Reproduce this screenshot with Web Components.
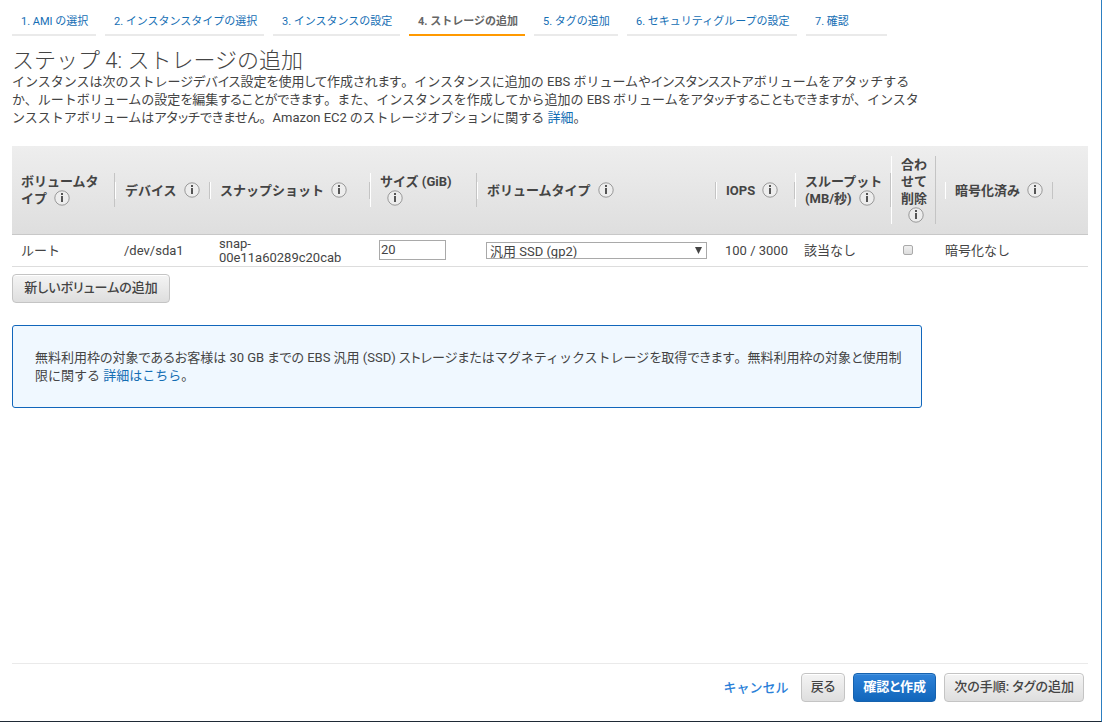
<!DOCTYPE html>
<html lang="ja">
<head>
<meta charset="utf-8">
<meta name="viewport" content="width=device-width, initial-scale=1">
<title>ステップ 4: ストレージの追加</title>
<style>
  body {
    margin: 0;
    background: #fff;
    color: #444;
    font: 13px/18px Roboto, "Noto Sans CJK JP", sans-serif;
  }
  .proportional { font-feature-settings: "palt"; }
</style>
</head>
<body>
<launch-wizard>
  <step-nav slot="nav">
    <step-tab>1. AMI の選択</step-tab>
    <step-tab>2. インスタンスタイプの選択</step-tab>
    <step-tab>3. インスタンスの設定</step-tab>
    <step-tab current>4. ストレージの追加</step-tab>
    <step-tab>5. タグの追加</step-tab>
    <step-tab>6. セキュリティグループの設定</step-tab>
    <step-tab>7. 確認</step-tab>
  </step-nav>
  <step-intro heading="ステップ 4: ストレージの追加">インスタンスは次のストレージ<span class="proportional">デバイス設定を使用して作成されます</span>。インスタンスに追加の EBS ボリュームや<span class="proportional">インスタンスストア</span>ボリュームをアタッチする<br>か、ルートボリュームの<span class="proportional">設定を編集することができます</span>。また、インスタンスを作成してから追加の EBS ボリュームを<span class="proportional">アタッチすることもできますが</span>、インスタ<br>ンスストアボリュームは<span class="proportional">アタッチできません</span>。<span class="proportional">Amazon EC2 の</span>ストレージオプションに関する<text-link>詳細</text-link>。</step-intro>
  <volume-table></volume-table>
  <aws-button class="add">新しいボリュームの追加</aws-button>
  <info-box><span class="proportional">無料利用枠の対象であるお客様は 30 GB までの EBS 汎用 (SSD) ストレージまたは</span>マグネティックストレージ<span class="proportional">を取得できます</span>。<span class="proportional">無料利用枠の対象と使用制</span><br>限に関する <text-link>詳細はこちら</text-link>。</info-box>
  <wizard-footer slot="footer">
    <text-link action>キャンセル</text-link>
    <aws-button>戻る</aws-button>
    <aws-button primary>確認と作成</aws-button>
    <aws-button>次の手順: タグの追加</aws-button>
  </wizard-footer>
</launch-wizard>

<script>
const define = (name, render) => customElements.define(name, class extends HTMLElement {
  constructor() {
    super();
    const template = document.createElement('template');
    template.innerHTML = render(this);
    this.attachShadow({ mode: 'open' }).append(template.content.cloneNode(true));
  }
});

define('launch-wizard', () => `
  <style>
    :host { display: flex; flex-direction: column; box-sizing: border-box; min-height: 100vh;
      padding: 8px 13px 19px 12px; border-right: 1px solid #2d7fc1; border-bottom: 1px solid #1f2a36; }
    main { flex: 1; display: flex; flex-direction: column; align-items: flex-start; }
    ::slotted(volume-table) { align-self: stretch; margin-top: 19px; }
    ::slotted(.add) { min-width: 158px; margin-top: 7px; }
    ::slotted(info-box) { margin-top: 22px; }
  </style>
  <slot name="nav"></slot>
  <main><slot></slot></main>
  <slot name="footer"></slot>`);

define('step-nav', () => `
  <style>
    :host { display: block; }
    nav { display: grid; grid-template-columns: 84px 159px 127px 116px 84px 170px 81px; gap: 9px; }
  </style>
  <nav><slot></slot></nav>`);

define('step-tab', el => `
  <style>
    :host { display: block; box-sizing: border-box; height: 28px; padding: 2px 0 0 9px; border-bottom: 2px solid #eaeaea;
      font-size: 11px; line-height: 24px; white-space: nowrap; }
    :host([current]) { border-color: #f90; font-weight: 700; }
    a { color: #146eb4; text-decoration: none; }
    :host([current]) a { color: #666; }
  </style>
  <a href="#"${el.hasAttribute('current') ? ' aria-current="step"' : ''}><slot></slot></a>`);

define('step-intro', el => `
  <style>
    :host { display: block; max-width: 940px; }
    h1 { margin: 13px 0 0; font-size: 22px; line-height: 24px; font-weight: 300; }
    p { margin: 0; line-height: 18px; }
  </style>
  <h1>${el.getAttribute('heading')}</h1>
  <p><slot></slot></p>`);

define('text-link', () => `
  <style>
    :host { display: inline; }
    a { color: #146eb4; text-decoration: none; }
    :host([action]) a { color: #2a7fd8; font-weight: 500; }
  </style>
  <a href="#"><slot></slot></a>`);

define('info-icon', () => `
  <style>
    :host { display: inline-block; width: 16px; height: 16px; margin-left: 7px; vertical-align: -3px; }
    svg { display: block; }
  </style>
  <svg width="16" height="16" viewBox="0 0 16 16" aria-hidden="true">
    <circle cx="8" cy="8" r="7.200" fill="#ededed" stroke="#999"/>
    <path d="M7 3h2v2H7zM7 6h2v6H7z" fill="#555"/>
  </svg>`);

define('aws-button', () => `
  <style>
    :host { display: block; }
    button { display: block; box-sizing: border-box; width: 100%; height: 29px; margin: 0; padding: 0 9px 2px; border: 1px solid #c4c4c4;
      border-radius: 4px; background: linear-gradient(#f4f4f4, #dedede); box-shadow: inset 0 1px #fff;
      color: #444; font: inherit; font-weight: 500; line-height: 25px; white-space: nowrap; font-feature-settings: "palt"; }
    :host([primary]) button { border-color: #1662ae; background: linear-gradient(#2f82d8, #1166bb);
      box-shadow: inset 0 1px #4a95e0; color: #fff; font-weight: 700; }
  </style>
  <button type="button"><slot></slot></button>`);

define('info-box', () => `
  <style>
    :host { display: block; box-sizing: border-box; width: 910px; max-width: 100%; min-height: 83px; padding: 23px 12px 22px 22px;
      border: 1px solid #1166bb; border-radius: 3px; background: #f0f8ff; }
  </style>
  <slot></slot>`);

define('wizard-footer', () => `
  <style>
    :host { display: flex; justify-content: flex-end; align-items: center; gap: 8px; padding: 9px 4px 0 0; border-top: 1px solid #eaeaea; }
    ::slotted(text-link) { margin-right: 4px; }
  </style>
  <slot></slot>`);

define('volume-table', () => `
  <style>
    :host { display: block; }
    table { width: 100%; table-layout: fixed; border-collapse: separate; border-spacing: 0; }
    th, td { box-sizing: border-box; padding: 0; text-align: left; vertical-align: middle; border-bottom: 1px solid #ddd; }
    thead { background: linear-gradient(#eee, #dedede); }
    th { height: 89px; border-bottom-color: #c8c8c8; font-weight: 700; line-height: 17px; white-space: nowrap; }
    th div { padding-left: 9px; border-left: 1px solid #fff; border-right: 1px solid #c4c4c4; }
    th:first-child div { padding-left: 8px; border-left-color: transparent; }
    th.encrypted { padding: 0 9px; }
    td { height: 32px; padding-left: 9px; line-height: 14px; }
    td.raised { padding-bottom: 2px; }
    input, select { display: block; box-sizing: border-box; margin: 0; border: 1px solid #a9a9a9; background: #fff;
      color: #444; font: inherit; }
    .size { width: 67px; height: 20px; padding: 0 1px; }
    .picker { display: grid; align-items: center; width: 221px; }
    .picker > * { grid-area: 1 / 1; }
    select { width: 100%; height: 17px; padding: 0 3px; appearance: none; border-radius: 0; line-height: 17px; }
    .picker svg { justify-self: end; margin-right: 5px; pointer-events: none; }
    input[type=checkbox] { width: 10px; height: 10px; margin-left: 3px; appearance: none; border-color: #aaa;
      border-radius: 2px; background: linear-gradient(#f0f0f0, #ddd); }
  </style>
  <table>
    <colgroup>
      <col style="width:103px"><col style="width:95px"><col style="width:160px"><col style="width:107px"><col>
      <col style="width:79px"><col style="width:96px"><col style="width:45px"><col style="width:126px"><col style="width:26px">
    </colgroup>
    <thead>
      <tr>
        <th scope="col"><div>ボリュームタ<br>イプ<info-icon></info-icon></div></th>
        <th scope="col"><div>デバイス<info-icon></info-icon></div></th>
        <th scope="col"><div>スナップショット<info-icon></info-icon></div></th>
        <th scope="col"><div>サイズ (GiB)<br><info-icon></info-icon></div></th>
        <th scope="col"><div>ボリュームタイプ<info-icon></info-icon></div></th>
        <th scope="col"><div>IOPS<info-icon></info-icon></div></th>
        <th scope="col"><div>スループット<br>(MB/秒)<info-icon></info-icon></div></th>
        <th scope="col"><div>合わ<br>せて<br>削除<br><info-icon></info-icon></div></th>
        <th scope="col" class="encrypted"><div>暗号化済み<info-icon></info-icon></div></th>
        <th></th>
      </tr>
    </thead>
    <tbody>
      <tr>
        <td>ルート</td>
        <td>/dev/sda1</td>
        <td>snap-<br>00e11a60289c20cab</td>
        <td class="raised"><input class="size" type="text" value="20" aria-label="サイズ (GiB)"></td>
        <td>
          <div class="picker">
            <select aria-label="ボリュームタイプ"><option>汎用 SSD (gp2)</option></select>
            <svg width="7" height="7" viewBox="0 0 7 7" aria-hidden="true"><path d="M0 0h7L3.500 7z" fill="#444"/></svg>
          </div>
        </td>
        <td>100 / 3000</td>
        <td>該当なし</td>
        <td class="raised"><input type="checkbox" aria-label="合わせて削除"></td>
        <td>暗号化なし</td>
        <td></td>
      </tr>
    </tbody>
  </table>`);
</script>
</body>
</html>
